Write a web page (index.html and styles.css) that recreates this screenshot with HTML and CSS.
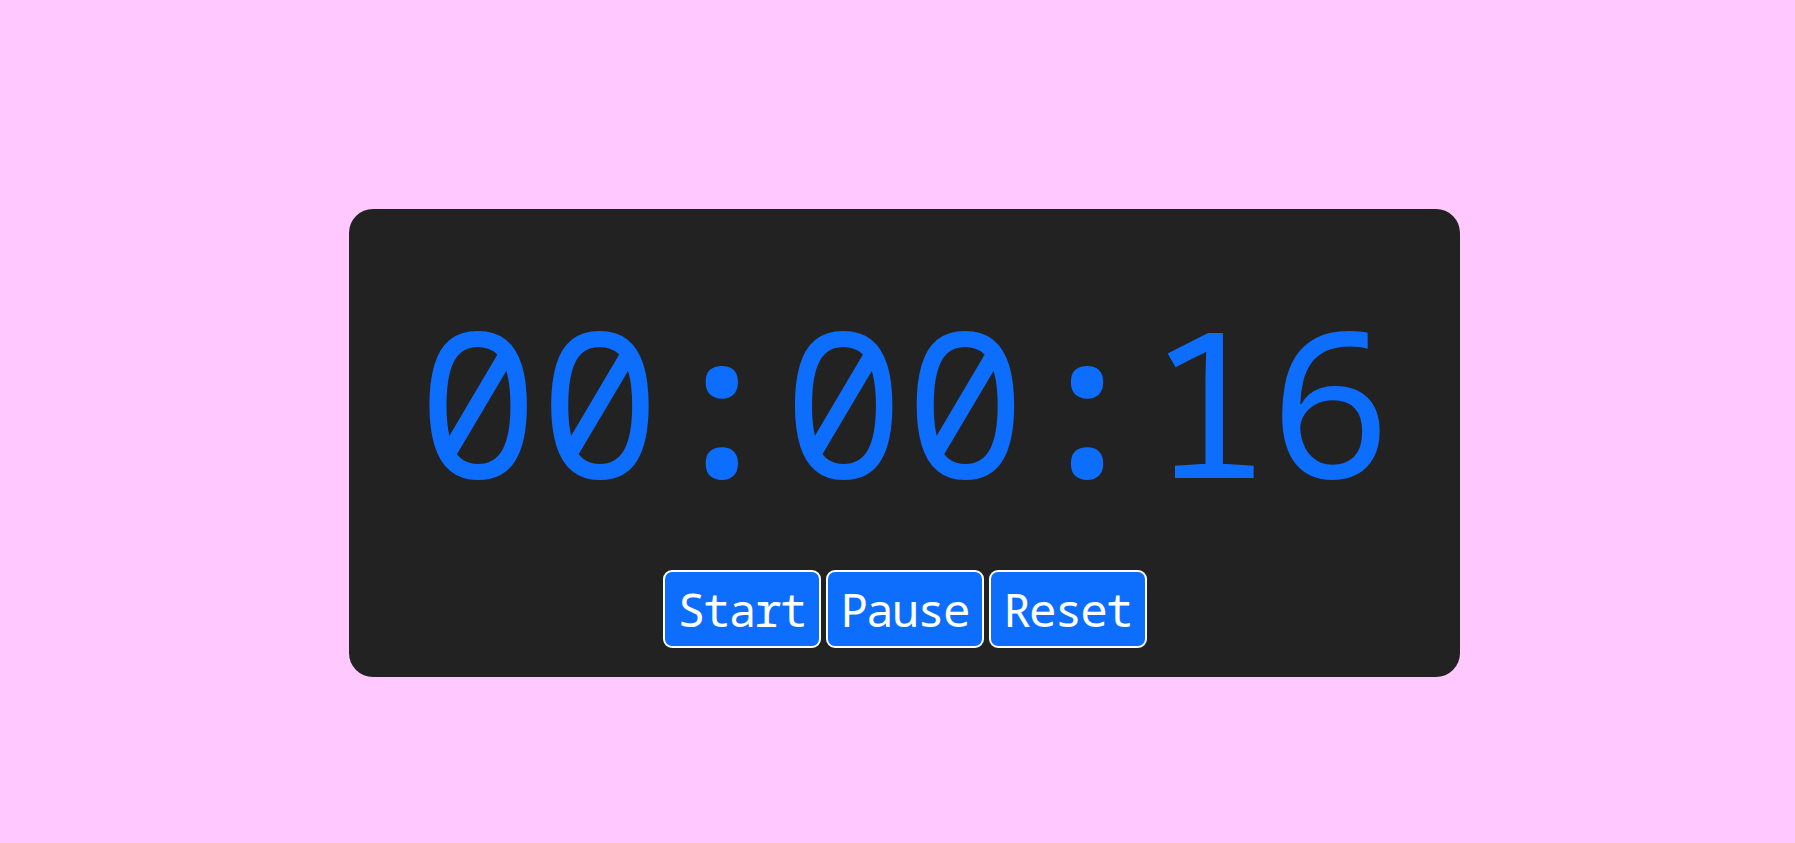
FILE: index.html
```html
<!DOCTYPE html>
<html>
<head>
<meta charset="utf-8">
<link rel="stylesheet" href="styles.css">
</head>
<body>
<div class="page">
  <div class="card">
    <div class="time">00<span class="sep">:</span>00<span class="sep">:</span>16</div>
    <div class="controls">
      <button class="btn">Start</button>
      <button class="btn">Pause</button>
      <button class="btn">Reset</button>
    </div>
  </div>
</div>
</body>
</html>
```

FILE: styles.css
```css
html, body {
  margin: 0;
  padding: 0;
  background: #ffc8ff;
}
.page {
  padding: 209px 335px 0 349px;
}
.card {
  background: #222222;
  border-radius: 24px;
  height: 468px;
  box-sizing: border-box;
  padding-top: 73px;
  display: flex;
  flex-direction: column;
  align-items: center;
}
.time {
  font-family: "Noto Sans Mono", monospace;
  font-size: 203px;
  line-height: 235px;
  color: #0d6efd;
}
.sep {
  font-weight: 600;
}
.controls {
  margin-top: 53px;
  display: flex;
  gap: 5px;
}
.btn {
  width: 158px;
  height: 78px;
  box-sizing: border-box;
  background: #0d6efd;
  color: #ffffff;
  border: 2px solid #ffffff;
  border-radius: 9px;
  font-family: "Noto Sans Mono", monospace;
  font-size: 46px;
  letter-spacing: -2px;
  padding: 0;
}
```
